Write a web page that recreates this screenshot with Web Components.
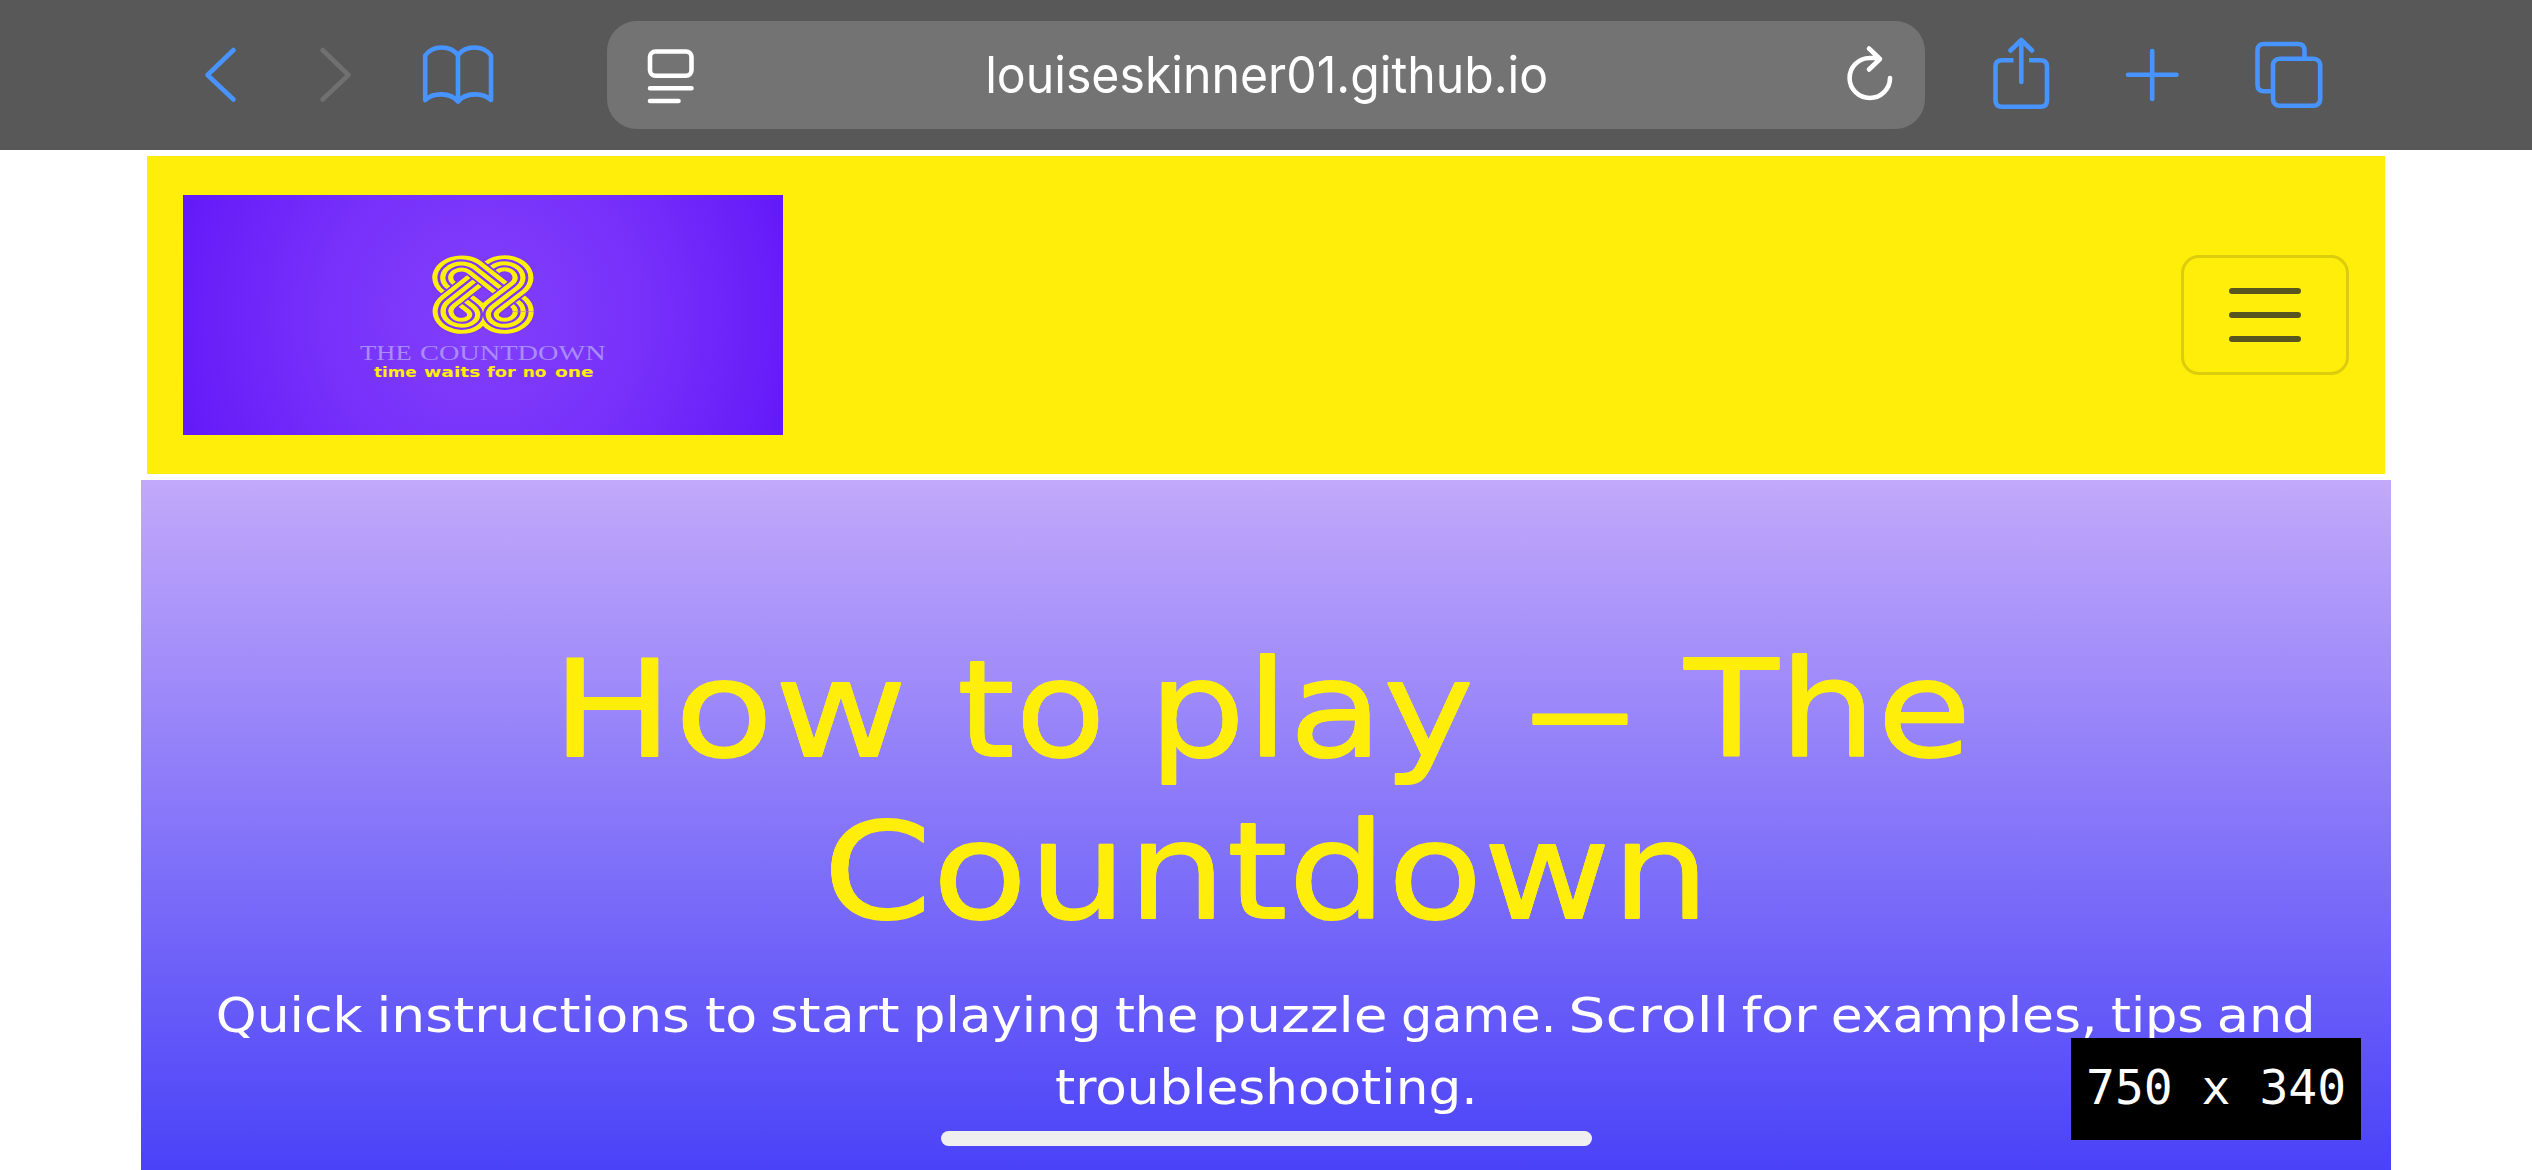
<!DOCTYPE html>
<html lang="en">
<head>
<meta charset="utf-8">
<title>How to play – The Countdown</title>
<style>
html,body{margin:0;padding:0;background:#fff}
body{width:2532px;height:1170px;overflow:hidden;font-family:"DejaVu Sans",sans-serif}
</style>
</head>
<body>
<countdown-page></countdown-page>
<script>
const define=(name,html,init)=>customElements.define(name,class extends HTMLElement{
  connectedCallback(){
    if(this.shadowRoot)return;
    this.attachShadow({mode:'open'}).innerHTML=html;
    if(init)init(this);
  }
});

/* A word stretched so that its ink spans exactly w pixels; g is the space before it. */
const pen=document.createElement('canvas').getContext('2d');
define('fit-word',`<style>:host{display:block;flex:none;white-space:pre}span{display:inline-block;transform-origin:0 0}</style><span><slot></slot></span>`,el=>{
  const cs=getComputedStyle(el),w=+el.getAttribute('w');
  pen.font=`${cs.fontWeight} ${cs.fontSize} ${cs.fontFamily}`;
  const m=pen.measureText(el.textContent);
  const s=w/(m.actualBoundingBoxRight+m.actualBoundingBoxLeft);
  const span=el.shadowRoot.querySelector('span');
  el.style.width=w+'px';
  el.style.marginLeft=(el.getAttribute('g')||0)+'px';
  span.style.transform=`translateX(${m.actualBoundingBoxLeft*s}px) scaleX(${s})`;
});

/* Toolbar glyph: a full-height slice of the bar starting at x. */
define('bar-icon',`<style>:host{display:block;flex:none;height:150px}svg{display:block;fill:none;stroke:currentColor;stroke-width:4.6;stroke-linecap:round;stroke-linejoin:round}</style><svg></svg>`,el=>{
  const paths={
    back:[204,34,'<path d="M233.500 50L207.500 75L233.500 99.500"/>'],
    forward:[318,34,'<path d="M322.500 50L348.500 75L322.500 99.500"/>'],
    book:[420,76,'<path d="M425.200 100V55.500C433 45 450 45 458 55C466 45 483 45 491 55.500V100C483 92.500 466 92 458 101.500C450 92 433 92.500 425.200 100M458 55V101"/>'],
    reader:[646,50,'<rect x="650" y="51.500" width="41.500" height="24.200" rx="5.500"/><path d="M650 88.200H691.500M650 101H678.500"/>'],
    reload:[1844,52,'<path d="M1890 78A20.200 20 0 1 1 1869.700 58H1879M1869 48.500L1880 59L1869 69.500"/>'],
    share:[1990,62,'<path stroke-linecap="butt" d="M2013.500 60.200H2002Q1995.500 60.200 1995.500 66.500V100.500Q1995.500 106.800 2002 106.800H2040.500Q2047 106.800 2047 100.500V66.500Q2047 60.200 2040.500 60.200H2029"/><path d="M2021.300 82V40M2010.500 50.500L2021.300 40L2032 50.500"/>'],
    plus:[2122,60,'<path d="M2128 74.800H2176.500M2152.200 51V99"/>'],
    tabs:[2250,78,'<rect x="2273" y="58.800" width="47.200" height="47" rx="6.500"/><path stroke-linecap="butt" d="M2304.500 57V50.500Q2304.500 44 2298 44H2264Q2257.500 44 2257.500 50.500V84.700Q2257.500 91.200 2264 91.200H2271"/>']
  };
  const [x,w,p]=paths[el.getAttribute('name')],svg=el.shadowRoot.querySelector('svg');
  svg.setAttribute('viewBox',`${x} 0 ${w} 150`);svg.setAttribute('width',w);svg.setAttribute('height',150);
  svg.innerHTML=p;
});

define('address-field',`<style>
:host{display:flex;flex:none;align-items:center;box-sizing:border-box;width:1318px;height:108px;border-radius:30px;background:#737373;color:#fff;padding-left:39px;margin-left:111px;overflow:hidden}
.url{font:400 50.500px/110px Inter,"Liberation Sans",sans-serif;margin-left:292px;width:558px}
.r{margin-left:298px}
</style><bar-icon name="reader"></bar-icon><div class="url"><fit-word w="558">louiseskinner01.github.io</fit-word></div><bar-icon class="r" name="reload"></bar-icon>`);

define('browser-bar',`<style>
:host{display:flex;align-items:center;box-sizing:border-box;height:150px;background:#585858;color:#4793ff;padding-left:204px}
.f{color:#707070;margin-left:80px}.b{margin-left:68px}.s{margin-left:65px}.p{margin-left:70px}.t{margin-left:68px}
</style><bar-icon name="back"></bar-icon><bar-icon class="f" name="forward"></bar-icon><bar-icon class="b" name="book"></bar-icon><address-field></address-field><bar-icon class="s" name="share"></bar-icon><bar-icon class="p" name="plus"></bar-icon><bar-icon class="t" name="tabs"></bar-icon>`);

/* One ribbon of the knot: three parallel lines with an outer gap where it crosses over. */
const strand=(d,clip)=>`<g${clip?` clip-path="url(#${clip})"`:''}>`+[['#7b38f9',57],['#ffee0a',48],['#7b38f9',24.500],['#ffee0a',12]].map(([c,w])=>`<path d="${d}" stroke="${c}" stroke-width="${w}"/>`).join('')+'</g>';
define('brand-logo',`<style>
:host{display:flex;flex-direction:column;align-items:center;flex:none;width:600px;height:240px;background:radial-gradient(circle 330px at 50% 50%,#8340fb 0,#7630fa 50%,#6218f8 100%)}
svg{display:block;margin:60px 0 0;fill:none}
.n{font:400 20.500px/24px "Liberation Serif",serif;color:#a98bfb;margin-top:7px}
.t{font:700 14px/16px "DejaVu Sans",sans-serif;color:#ffee0a;margin-top:-1px}
.t,.n{display:flex}
</style><svg width="102" height="79" viewBox="674.500 344.500 233 236" preserveAspectRatio="none">
<clipPath id="l"><path d="M600 300H791V600H600Z"/></clipPath><clipPath id="r"><path d="M791 300H990V600H791Z"/></clipPath>
${strand('M741 556H742C764 556 779 540 779 522C779 510 774 504 766 496L712 442A43 43 0 0 1 699 412','l')}
${strand('M840 369A43 43 0 0 0 810 382L712 483A43 43 0 0 0 743 556')}
${strand('M699 413A43 43 0 0 1 772 382L870 483A43 43 0 0 1 883 514')}
${strand('M883 513A43 43 0 0 1 840 556C818 556 803 540 803 522C803 510 808 504 816 496L870 442A43 43 0 0 0 839 369','r')}
</svg>
<div class="n"><fit-word w="51">THE</fit-word><fit-word g="9" w="186">COUNTDOWN</fit-word></div>
<div class="t"><fit-word w="42">time</fit-word><fit-word g="8" w="56">waits</fit-word><fit-word g="7" w="29">for</fit-word><fit-word g="8" w="23">no</fit-word><fit-word g="8" w="38">one</fit-word></div>`);

define('menu-toggle',`<style>
:host{display:flex;flex:none;flex-direction:column;justify-content:center;align-items:center;gap:18px;box-sizing:border-box;width:168px;height:120px;border:3px solid #dbcd0d;border-radius:18px}
i{width:72px;height:6px;border-radius:3px;background:#585520}
</style><i></i><i></i><i></i>`);

define('site-nav',`<style>
:host{display:flex;align-items:center;justify-content:space-between;box-sizing:border-box;width:2238px;height:318px;margin:6px 0 6px 147px;padding:0 36px;background:#ffee0a}
</style><brand-logo></brand-logo><menu-toggle></menu-toggle>`);

define('hero-panel',`<style>
:host{display:block;box-sizing:border-box;width:2250px;height:690px;padding-top:148.500px;margin-left:141px;background:linear-gradient(#c2a9fa,#4a42f8)}
h1{margin:0;font:400 133px/162px "DejaVu Sans",sans-serif;color:#ffee0a;-webkit-text-stroke:.6px #ffee0a;text-shadow:0 1px #ffee0a,0 -1px #ffee0a}
p{margin:27px 0 0;font:400 47.500px/72px "DejaVu Sans",sans-serif;color:#fff}
span{display:flex}
</style>
<h1></h1><p></p>`,el=>{
  /* Each word is listed with the left and right edge of its ink. */
  const line=a=>{let x=141;return '<span>'+a.map(([t,l,r])=>{const s=`<fit-word g="${l-x}" w="${r-l}">${t}</fit-word>`;x=r;return s}).join(' ')+'</span>'};
  el.shadowRoot.querySelector('h1').innerHTML=line([['How',567,902],['to',960,1099],['play',1162,1470],['–',1532,1627],['The',1683,1964]])+line([['Countdown',831,1697]]);
  el.shadowRoot.querySelector('p').innerHTML=line([['Quick',218,363],['instructions',381,688],['to',706,755],['start',772,899],['playing',917,1097],['the',1116,1196],['puzzle',1216,1385],['game.',1403,1551],['Scroll',1572,1724],['for',1743,1817],['examples,',1833,2093],['tips',2112,2202],['and',2219,2311]])+line([['troubleshooting.',1056,1472]]);
});

define('size-badge',`<style>:host{position:absolute;left:2071px;top:1038px;box-sizing:border-box;width:290px;height:102px;padding-left:15px;background:#000;color:#fff;font:400 48px/99px "DejaVu Sans Mono",monospace;white-space:pre}</style>750 x 340`);
define('home-indicator',`<style>:host{position:absolute;left:941px;top:1131px;width:651px;height:15px;border-radius:8px;background:#efefef}</style>`);

define('countdown-page',`<style>:host{display:block;position:relative;width:2532px;height:1170px;background:#fff;overflow:hidden}</style>
<browser-bar></browser-bar><site-nav></site-nav><hero-panel></hero-panel><size-badge></size-badge><home-indicator></home-indicator>`);
</script>
</body>
</html>
